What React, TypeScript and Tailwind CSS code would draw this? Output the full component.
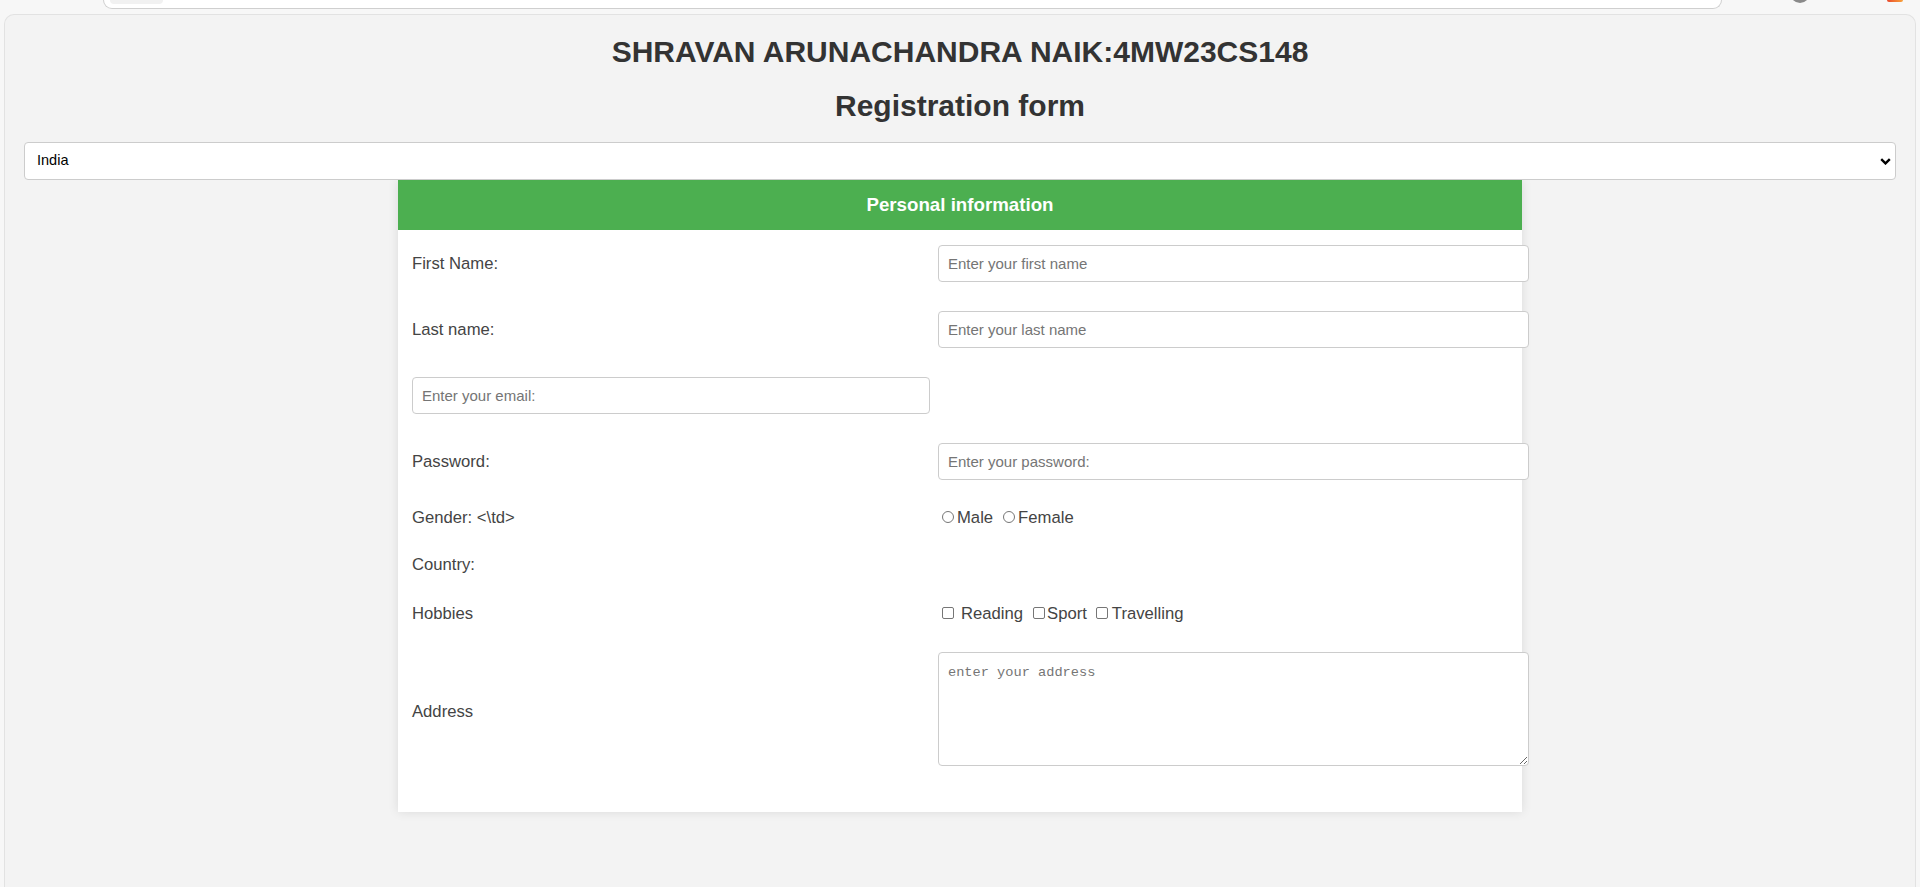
import type { ReactNode } from "react";

// one table-like row: label on the left, control on the right
function Row({ h, left, right }: { h: string; left?: ReactNode; right?: ReactNode }) {
  return (
    <div className={`grid grid-cols-[526px_591px] items-center ${h}`}>
      <div className="text-[16.67px] text-[#444]">{left}</div>
      <div className="flex items-center text-[16.67px] text-[#444]">{right}</div>
    </div>
  );
}

const inputCls =
  "w-full h-[37px] border border-[#cccccc] rounded-[4px] bg-white pl-[9px] text-[15px] text-[#333] placeholder:text-[#757575] outline-none";

export default function App() {
  return (
    <div className="min-h-screen overflow-hidden bg-[#f7f7f7] font-['Liberation_Sans',Arial,sans-serif]">
      {/* bits of the browser chrome cut off at the top */}
      <div className="h-[14px] flex items-start overflow-hidden">
        <div className="ml-[103px] w-[1619px] h-[9px] shrink-0 bg-white border border-t-0 border-[#cfcfcf] rounded-b-[12px] flex">
          <div className="ml-[6px] w-[53px] h-[4px] bg-[#f1f1f1] rounded-b-[6px]" />
        </div>
        <div className="ml-[68px] w-[20px] h-[20px] shrink-0 -mt-[17px] rounded-full bg-[#8a8a8a]" />
        <div className="ml-[77px] w-[16px] h-[2px] shrink-0 rounded-b-[3px] bg-gradient-to-r from-[#e8452c] to-[#f7a23b]" />
      </div>

      {/* page frame */}
      <div className="ml-[4px] w-[1912px] h-[873px] bg-[#f3f3f3] border border-b-0 border-[#e2e2e2] rounded-t-[10px] px-[19px] pt-[20px]">
        <h1 className="text-[30px] leading-[34px] font-bold text-center text-[#333]">
          SHRAVAN ARUNACHANDRA NAIK:4MW23CS148
        </h1>
        <h2 className="mt-[20px] text-[30px] leading-[34px] font-bold text-center text-[#333]">
          Registration form
        </h2>

        <div className="relative mt-[19px]">
          <select
            defaultValue="India"
            className="appearance-none w-full h-[38px] border border-[#cccccc] rounded-[4px] bg-white pl-[12px] text-[14.5px] text-black outline-none"
          >
            <option>India</option>
            <option>USA</option>
            <option>UK</option>
          </select>
          <svg
            className="absolute right-[5px] top-[16px] w-[11px] h-[7px] pointer-events-none"
            viewBox="0 0 11 7"
            fill="none"
          >
            <path d="M1.2 1.2 5.5 5.4 9.8 1.2" stroke="#000" strokeWidth={2.4} />
          </svg>
        </div>

        {/* form card */}
        <div className="w-[1124px] mx-auto bg-white shadow-[0_0_10px_rgba(0,0,0,0.1)]">
          <div className="h-[50px] bg-[#4CAF50] flex items-center justify-center text-white font-bold text-[18.72px]">
            Personal information
          </div>

          <div className="pl-[14px] pb-[32px]">
            <Row
              h="h-[66px]"
              left="First Name:"
              right={<input type="text" placeholder="Enter your first name" className={inputCls} />}
            />
            <Row
              h="h-[66px]"
              left="Last name:"
              right={<input type="text" placeholder="Enter your last name" className={inputCls} />}
            />
            <Row
              h="h-[66px]"
              left={
                <input type="email" placeholder="Enter your email:" className={`${inputCls} !w-[518px]`} />
              }
            />
            <Row
              h="h-[66px]"
              left="Password:"
              right={<input type="password" placeholder="Enter your password:" className={inputCls} />}
            />
            <Row
              h="h-[46px]"
              left="Gender: <\td>"
              right={
                <>
                  <input
                    type="radio"
                    name="gender"
                    className="appearance-none ml-[4px] mr-[3px] w-[12px] h-[12px] rounded-full border border-[#767676] bg-white"
                  />
                  <span>Male</span>
                  <input
                    type="radio"
                    name="gender"
                    className="appearance-none ml-[10px] mr-[3px] w-[12px] h-[12px] rounded-full border border-[#767676] bg-white"
                  />
                  <span>Female</span>
                </>
              }
            />
            <Row h="h-[49px]" left="Country:" />
            <Row
              h="h-[48px]"
              left="Hobbies"
              right={
                <>
                  <input
                    type="checkbox"
                    className="appearance-none ml-[4px] mr-[7px] w-[12px] h-[12px] rounded-[2px] border border-[#767676] bg-white"
                  />
                  <span>Reading</span>
                  <input
                    type="checkbox"
                    className="appearance-none ml-[10px] mr-[2px] w-[12px] h-[12px] rounded-[2px] border border-[#767676] bg-white"
                  />
                  <span>Sport</span>
                  <input
                    type="checkbox"
                    className="appearance-none ml-[9px] mr-[4px] w-[12px] h-[12px] rounded-[2px] border border-[#767676] bg-white"
                  />
                  <span>Travelling</span>
                </>
              }
            />
            <Row
              h="h-[143px]"
              left={<span className="block pt-[5px]">Address</span>}
              right={
                <textarea
                  placeholder="enter your address"
                  className="w-full h-[114px] border border-[#cccccc] rounded-[4px] bg-white pl-[9px] pt-[11px] text-[13.65px] leading-[18px] font-['Liberation_Mono',monospace] text-[#333] placeholder:text-[#757575] outline-none"
                />
              }
            />
          </div>
        </div>
      </div>
    </div>
  );
}
